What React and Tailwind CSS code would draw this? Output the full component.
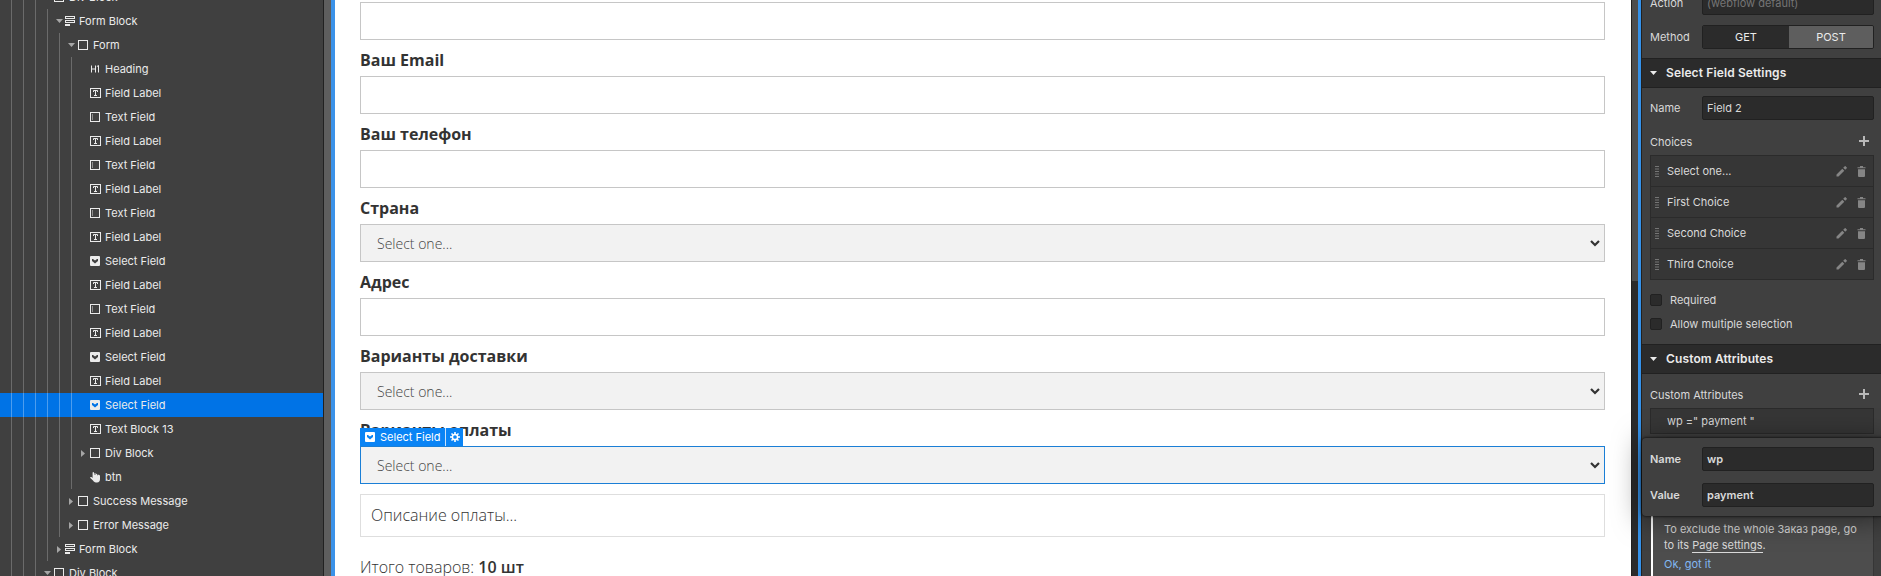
import React from 'react';

const tree = [
  { depth: 3, icon: 'box', label: 'Div Block', arrow: 'down' },
  { depth: 4, icon: 'form', label: 'Form Block', arrow: 'down' },
  { depth: 5, icon: 'box', label: 'Form', arrow: 'down' },
  { depth: 6, icon: 'h1', label: 'Heading' },
  { depth: 6, icon: 'label', label: 'Field Label' },
  { depth: 6, icon: 'input', label: 'Text Field' },
  { depth: 6, icon: 'label', label: 'Field Label' },
  { depth: 6, icon: 'input', label: 'Text Field' },
  { depth: 6, icon: 'label', label: 'Field Label' },
  { depth: 6, icon: 'input', label: 'Text Field' },
  { depth: 6, icon: 'label', label: 'Field Label' },
  { depth: 6, icon: 'select', label: 'Select Field' },
  { depth: 6, icon: 'label', label: 'Field Label' },
  { depth: 6, icon: 'input', label: 'Text Field' },
  { depth: 6, icon: 'label', label: 'Field Label' },
  { depth: 6, icon: 'select', label: 'Select Field' },
  { depth: 6, icon: 'label', label: 'Field Label' },
  { depth: 6, icon: 'select', label: 'Select Field', selected: true },
  { depth: 6, icon: 'label', label: 'Text Block 13' },
  { depth: 6, icon: 'box', label: 'Div Block', arrow: 'right' },
  { depth: 6, icon: 'hand', label: 'btn' },
  { depth: 5, icon: 'box', label: 'Success Message', arrow: 'right' },
  { depth: 5, icon: 'box', label: 'Error Message', arrow: 'right' },
  { depth: 4, icon: 'form', label: 'Form Block', arrow: 'right' },
  { depth: 3, icon: 'box', label: 'Div Block', arrow: 'down' },
];

function NodeIcon({ type }) {
  if (type === 'box')
    return (
      <svg width="11" height="11" viewBox="0 0 11 11" fill="none" stroke="currentColor">
        <rect x=".5" y=".5" width="9" height="9" />
      </svg>
    );
  if (type === 'form')
    return (
      <svg className="-ml-px" width="11" height="11" viewBox="0 0 11 11" fill="currentColor">
        <path fillRule="evenodd" d="M0 0h10v3H0zM1 1v1h8V1zM0 4h10v3H0zM1 5v1h8V5zM0 8h5v2H0z" />
      </svg>
    );
  if (type === 'h1')
    return (
      <svg width="11" height="11" viewBox="0 0 11 11" fill="none" stroke="currentColor">
        <path d="M1.5 1.5v7M5.5 1.5v7M1.5 5h4M8.5 8.5v-7L6.8 2.6" />
      </svg>
    );
  if (type === 'label')
    return (
      <svg width="11" height="11" viewBox="0 0 11 11" fill="none" stroke="currentColor">
        <rect x=".5" y=".5" width="10" height="9" />
        <path d="M3.5 4V2.5h4V4M5.5 2.5v5M4 7.5h3" />
      </svg>
    );
  if (type === 'input')
    return (
      <svg width="11" height="11" viewBox="0 0 11 11" fill="none" stroke="currentColor">
        <rect x=".5" y=".5" width="9" height="9" />
        <path d="M2.5 2v6" opacity=".45" />
      </svg>
    );
  if (type === 'select')
    return (
      <svg width="11" height="11" viewBox="0 0 11 11" fill="currentColor">
        <path
          fillRule="evenodd"
          d="M1 0h8a1 1 0 0 1 1 1v8a1 1 0 0 1-1 1H1a1 1 0 0 1-1-1V1a1 1 0 0 1 1-1zM2 3v2l3 2.5L8 5V3H7L5 4.5 3 3z"
        />
      </svg>
    );
  return (
    <svg width="11" height="11" viewBox="0 0 11 11" fill="currentColor">
      <path d="M2.6.7C2.6-.2 4-.2 4 .7V3h.4V1.6c0-.7 1.2-.7 1.2 0V3H6V2.2c0-.7 1.2-.7 1.2 0V3.500h.4V3c0-.7 2.4-.3 2.4.8V7C10 9 9 10.500 7 10.500H6C4.500 10.500 3.600 9.500 3 8.600L.3 6C-.3 5.200.7 4.600 1.400 5.100l1.200.9z" />
    </svg>
  );
}

function Arrow({ dir }) {
  if (dir === 'down')
    return (
      <svg className="ml-2" width="7" height="4" viewBox="0 0 7 4" fill="#a6a6a6">
        <path d="M0 0h7L3.500 4z" />
      </svg>
    );
  if (dir === 'right')
    return (
      <svg className="ml-[9px]" width="4" height="7" viewBox="0 0 4 7" fill="#a6a6a6">
        <path d="M0 0v7l4-3.500z" />
      </svg>
    );
  return null;
}

function TreeRow({ node }) {
  return (
    <div className={`flex h-6 shrink-0 items-center ${node.selected ? 'bg-[#0073e6]' : ''}`}>
      {Array.from({ length: node.depth }, (_, i) => (
        <span
          key={i}
          className={`h-6 w-3 shrink-0 border-r ${node.selected ? 'border-[#4d9dee]' : 'border-[#6b6b6b]'}`}
        />
      ))}
      <span className="flex w-[18px] shrink-0 items-center">
        <Arrow dir={node.arrow} />
      </span>
      <span className={`flex shrink-0 pt-px ${node.icon === 'form' ? 'w-[13px]' : 'w-[15px]'}`}>
        <NodeIcon type={node.icon} />
      </span>
      <span className="whitespace-nowrap">{node.label}</span>
    </div>
  );
}

function Chevron() {
  return (
    <svg className="mt-px mr-1" width="10" height="7" viewBox="0 0 10 7" fill="none" stroke="#333" strokeWidth="2.2">
      <path d="M1 1l4 4 4-4" />
    </svg>
  );
}

function Field({ label, select, selected }) {
  return (
    <div className="flex h-[74px] shrink-0 flex-col">
      <div className="h-9 pt-[7px] text-base leading-[26px] font-bold text-[#333]">{label}</div>
      <div
        className={`flex h-[38px] items-center justify-between border pl-4 ${selected ? 'border-[#1b7fd6]' : 'border-[#c6c6c6]'} ${select ? 'bg-[#f2f2f2]' : 'bg-white'}`}
      >
        {select && (
          <>
            <span className="pt-px text-sm font-light text-[#444]">Select one...</span>
            <Chevron />
          </>
        )}
      </div>
    </div>
  );
}

function Gear() {
  return (
    <svg width="10" height="10" viewBox="0 0 10 10" fill="none" stroke="currentColor">
      <circle cx="5" cy="5" r="2.6" strokeWidth="1.5" />
      <path
        strokeWidth="1.6"
        d="M5 0v2M5 8v2M0 5h2M8 5h2M1.500 1.500l1.300 1.300M7.200 7.200l1.300 1.300M1.500 8.500l1.300-1.300M7.200 2.800l1.300-1.300"
      />
    </svg>
  );
}

function Canvas() {
  return (
    <div className="relative flex w-[1296px] shrink-0 flex-col overflow-hidden bg-white pr-[26px] pl-[25px] font-['Open_Sans','Noto_Sans',sans-serif]">
      <div className="-mt-[34px] flex shrink-0 flex-col">
        <Field label="" />
        <Field label="Ваш Email" />
        <Field label="Ваш телефон" />
        <Field label="Страна" select />
        <Field label="Адрес" />
        <Field label="Варианты доставки" select />
        <Field label="Варианты оплаты" select selected />
      </div>
      <div className="mt-[10px] flex h-[43px] shrink-0 items-center border border-[#dedede] pb-0.5 pl-2.5 text-base font-light text-[#333]">
        Описание оплаты...
      </div>
      <div className="mt-[17px] shrink-0 text-base leading-[26px] font-light text-[#333]">
        Итого товаров: <span className="font-semibold">10 шт</span>
      </div>
      <div className="absolute top-[428px] left-[25px] flex h-[18px] items-center bg-[#0a84f5] font-['Inter',sans-serif] text-[11px] text-white">
        <span className="flex h-[18px] w-[86px] items-center border-r border-[#c9e2fb] pl-[5px]">
          <span className="w-[15px] shrink-0 pt-px">
            <NodeIcon type="select" />
          </span>
          <span className="whitespace-nowrap">Select Field</span>
        </span>
        <span className="flex w-[17px] justify-center">
          <Gear />
        </span>
      </div>
    </div>
  );
}

function Plus() {
  return (
    <svg width="10" height="10" viewBox="0 0 10 10" stroke="#b8b8b8" strokeWidth="2">
      <path d="M5 0v10M0 5h10" />
    </svg>
  );
}

function Row({ label, children, bold }) {
  return (
    <div className={`flex h-6 shrink-0 items-center ${bold ? 'font-semibold' : ''}`}>
      <span className="w-13 shrink-0">{label}</span>
      {children}
    </div>
  );
}

function Input({ children, dim }) {
  return (
    <div
      className={`flex h-6 w-[172px] items-center rounded-xs border border-[#212121] bg-[#2b2b2b] pl-1 ${dim ? 'text-[#757575]' : ''}`}
    >
      {children}
    </div>
  );
}

function SectionHeader({ children }) {
  return (
    <div className="flex h-[30px] shrink-0 items-center border-y border-[#212121] bg-[#2b2b2b] pl-2 text-[12px] font-semibold tracking-[0.01em] text-[#ebebeb]">
      <svg className="mr-[9px]" width="7" height="4" viewBox="0 0 7 4" fill="currentColor">
        <path d="M0 0h7L3.500 4z" />
      </svg>
      {children}
    </div>
  );
}

function Choice({ children }) {
  return (
    <div className="flex h-[31px] items-center border-b border-[#2b2b2b] pr-[7px] last:h-[30px] last:border-b-0">
      <svg className="ml-1 shrink-0" width="4" height="11" viewBox="0 0 4 11" stroke="#757575">
        <path d="M0 .5h4M0 3h4M0 5.500h4M0 8h4M0 10.500h4" />
      </svg>
      <span className="ml-2 flex-1">{children}</span>
      <svg className="mr-[10px]" width="11" height="11" viewBox="0 0 11 11" fill="#858585">
        <path d="M.5 10.500V8.500L6.300 2.700l2 2L2.500 10.500zM7.200 1.800L8.800.2a.6.6 0 0 1 .8 0l1.200 1.200a.6.6 0 0 1 0 .8L9.200 3.800z" />
      </svg>
      <svg width="9" height="11" viewBox="0 0 9 11" fill="#858585">
        <path d="M.5 1.200h2.500V0h3v1.200h2.500v1h-8zM1 3.200h7V10a1 1 0 0 1-1 1H2a1 1 0 0 1-1-1z" />
      </svg>
    </div>
  );
}

function Check({ children }) {
  return (
    <div className="flex h-6 items-center">
      <span className="mr-2 h-3 w-3 rounded-xs border border-[#212121] bg-[#2b2b2b]" />
      {children}
    </div>
  );
}

function SettingsPanel() {
  return (
    <div className="flex w-[239px] shrink-0 flex-col overflow-hidden bg-[#404040]">
      <div className="-mt-[9px] flex h-[67px] shrink-0 flex-col gap-2.5 pl-2">
        <Row label="Action">
          <Input dim>(webflow default)</Input>
        </Row>
        <Row label="Method">
          <div className="flex h-6 w-[172px] overflow-hidden rounded-xs border border-[#212121] text-[#ebebeb]">
            <span className="flex w-[86px] items-center justify-center bg-[#2b2b2b]">GET</span>
            <span className="flex flex-1 items-center justify-center bg-[#5e5e5e]">POST</span>
          </div>
        </Row>
      </div>
      <SectionHeader>Select Field Settings</SectionHeader>
      <div className="flex h-64 shrink-0 flex-col pt-2 pl-2">
        <Row label="Name">
          <Input>Field 2</Input>
        </Row>
        <div className="mt-[9px] flex h-[26px] shrink-0 items-center justify-between pr-[12px]">
          <span>Choices</span>
          <span className="pb-0.5">
            <Plus />
          </span>
        </div>
        <div className="w-[224px] shrink-0 border border-[#2b2b2b] bg-[#363636]">
          <Choice>Select one...</Choice>
          <Choice>First Choice</Choice>
          <Choice>Second Choice</Choice>
          <Choice>Third Choice</Choice>
        </div>
        <div className="mt-2 flex flex-col">
          <Check>Required</Check>
          <Check>Allow multiple selection</Check>
        </div>
      </div>
      <SectionHeader>Custom Attributes</SectionHeader>
      <div className="flex flex-col pl-2">
        <div className="mt-2 flex h-[26px] shrink-0 items-center justify-between pr-[12px]">
          <span>Custom Attributes</span>
          <span className="pb-0.5">
            <Plus />
          </span>
        </div>
        <div className="flex h-[26px] w-[224px] shrink-0 items-center border border-[#2b2b2b] bg-[#363636] pl-4">
          wp =" payment "
        </div>
        <div className="mt-[66px] ml-px flex h-[90px] w-[223px] shrink-0 flex-col border-r border-l-2 border-r-[#363636] border-l-white bg-[#4d4d4d] pt-[21px] pl-[11px] leading-4">
          <span className="whitespace-nowrap">To exclude the whole Заказ page, go</span>
          <span>
            to its <span className="border-b border-[#d9d9d9]">Page settings</span>.
          </span>
          <span className="mt-[3px] text-[#82b8f2]">Ok, got it</span>
        </div>
      </div>
    </div>
  );
}

export default function App() {
  return (
    <div className="relative flex h-[576px] w-[1881px] overflow-hidden bg-[#404040] font-['Inter',sans-serif] text-[11px] leading-[18px] text-[#d9d9d9]">
      <div className="flex w-[324px] shrink-0 flex-col overflow-hidden border-r border-[#212121] text-[#ebebeb]">
        <div className="-mt-[15px] flex flex-col">
          {tree.map((n, i) => (
            <TreeRow key={i} node={n} />
          ))}
        </div>
      </div>
      <div className="w-[7px] shrink-0 bg-[#5e5e5e]" />
      <div className="w-1 shrink-0 bg-[#3b92e8]" />
      <Canvas />
      <div className="w-[7px] shrink-0 border-l border-[#212121] bg-[#2b2b2b]">
        <div className="h-[281px] bg-[#4d4d4d]" />
      </div>
      <div className="w-1 shrink-0 border-r border-[#212121] bg-[#3592ea]" />
      <SettingsPanel />
      <div className="absolute top-[438px] left-[1642px] flex h-[78px] w-[245px] flex-col gap-3 rounded-sm bg-[#404040] pt-[9px] pl-2 shadow-[0_3px_28px_rgba(0,0,0,0.5),0_0_3px_#000]">
        <Row label="Name" bold>
          <Input>wp</Input>
        </Row>
        <Row label="Value" bold>
          <Input>payment</Input>
        </Row>
      </div>
    </div>
  );
}
